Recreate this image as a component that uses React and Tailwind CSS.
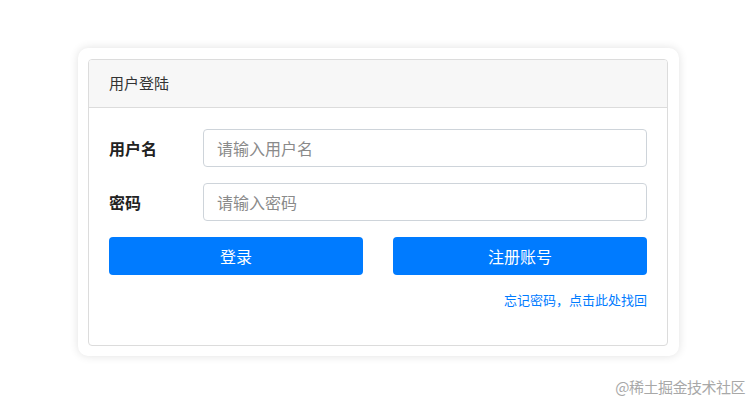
import React from 'react';

const font = { fontFamily: '"Noto Sans CJK SC", "Noto Sans", sans-serif' };

const Field = ({ label, placeholder, type = 'text' }) => (
    <div className="flex items-center">
        <label className="w-[94px] shrink-0 text-[16px] font-bold text-[#222] leading-[38px]">{label}</label>
        <input
            type={type}
            placeholder={placeholder}
            className="flex-1 h-[38px] border border-[#ced4da] rounded-[4px] px-[13px] text-[16px] text-[#495057] placeholder:text-[#8a8a8a] outline-none bg-white"
        />
    </div>
);

export default function App() {
    return (
        <div className="relative w-[751px] h-[402px] bg-white overflow-hidden" style={font}>
            {/* outer panel */}
            <div className="ml-[78px] mt-[48px] w-[601px] pl-[10px] pr-[11px] pt-[11px] pb-[10px] bg-white rounded-[10px] shadow-[0_0_10px_rgba(0,0,0,0.12)]">
                {/* card */}
                <div className="border border-[#dcdcdc] rounded-[4px] overflow-hidden">
                    <div className="h-[48px] bg-[#f7f7f7] border-b border-[#dcdcdc] px-[20px] flex items-center text-[15px] text-[#333]">
                        用户登陆
                    </div>
                    <div className="px-[20px] pt-[21px] pb-[36px]">
                        <div className="flex flex-col gap-[16px]">
                            <Field label="用户名" placeholder="请输入用户名" />
                            <Field label="密码" placeholder="请输入密码" type="password" />
                            <div className="flex gap-[30px]">
                                <button className="flex-1 h-[38px] rounded-[4px] bg-[#007bff] text-white text-[16px]">登录</button>
                                <button className="flex-1 h-[38px] rounded-[4px] bg-[#007bff] text-white text-[16px]">注册账号</button>
                            </div>
                        </div>
                        <div className="mt-[16px] h-[18px] flex justify-end">
                            <a className="text-[13px] leading-[18px] text-[#007bff] cursor-pointer">忘记密码，点击此处找回</a>
                        </div>
                    </div>
                </div>
            </div>

            {/* watermark */}
            <div className="absolute right-[6px] bottom-[5px] text-[15px] tracking-[-0.5px] leading-[20px] text-[#a8a8a8]">
                @稀土掘金技术社区
            </div>
        </div>
    );
}
